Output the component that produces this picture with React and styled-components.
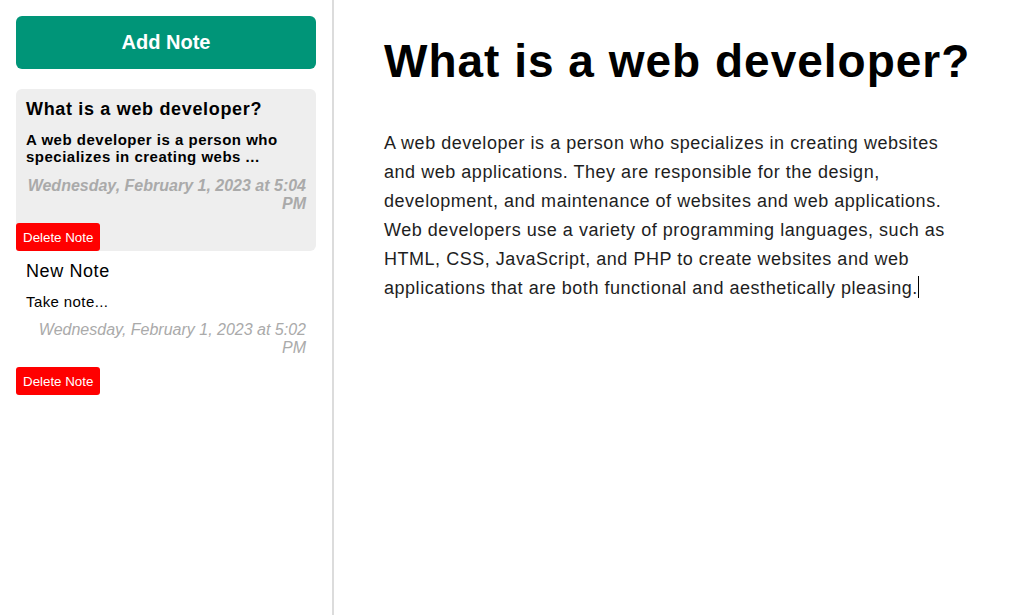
import React from "react";
import styled, { createGlobalStyle } from "styled-components";

const GlobalStyle = createGlobalStyle`
  html, body { margin: 0; padding: 0; background: #fff; }
  body { font-family: "Liberation Sans", Arial, sans-serif; }
  * { box-sizing: border-box; }
`;

const Layout = styled.div`
  display: flex;
  width: 1019px;
  height: 615px;
  overflow: hidden;
`;

const Sidebar = styled.aside`
  width: 334px;
  flex-shrink: 0;
  border-right: 2px solid #dcdcdc;
  padding: 16px;
  display: flex;
  flex-direction: column;
`;

const AddButton = styled.button`
  height: 53px;
  width: 100%;
  border: none;
  border-radius: 6px;
  background: #009578;
  color: #fff;
  font-family: "Liberation Sans", Arial, sans-serif;
  font-weight: bold;
  font-size: 20px;
  margin-bottom: 20px;
  cursor: pointer;
`;

const NoteList = styled.div`
  display: flex;
  flex-direction: column;
`;

const NoteCard = styled.div`
  border-radius: 6px;
  background: ${(p) => (p.$active ? "#eeeeee" : "transparent")};
  padding-top: 10px;
  display: flex;
  flex-direction: column;
`;

const NoteTitle = styled.div`
  font-size: 18px;
  font-weight: ${(p) => (p.$active ? "bold" : "normal")};
  letter-spacing: ${(p) => (p.$active ? "0.67px" : "0.6px")};
  color: #000;
  padding: 0 10px;
  margin-bottom: 11px;
`;

const NoteBody = styled.div`
  font-size: 15px;
  font-weight: ${(p) => (p.$active ? "bold" : "normal")};
  letter-spacing: ${(p) => (p.$active ? "0.5px" : "0.4px")};
  color: #000;
  padding: 0 10px;
  margin-bottom: ${(p) => (p.$active ? "12px" : "11px")};
`;

const NoteDate = styled.div`
  font-size: 16px;
  font-style: italic;
  font-weight: ${(p) => (p.$active ? "bold" : "normal")};
  color: #aaaaaa;
  text-align: right;
  padding: 0 10px;
  margin-bottom: 10px;
`;

const DeleteButton = styled.button`
  align-self: flex-start;
  height: 28px;
  padding: 0 7px;
  border: none;
  border-radius: 3px;
  background: #ff0000;
  color: #fff;
  font-family: "Liberation Sans", Arial, sans-serif;
  font-size: 13.33px;
  cursor: pointer;
`;

const Main = styled.main`
  flex: 1;
  padding: 34px 50px;
  display: flex;
  flex-direction: column;
`;

const Title = styled.div`
  font-size: 46px;
  font-weight: bold;
  letter-spacing: 1px;
  color: #000;
  white-space: nowrap;
  margin-bottom: 41px;
`;

const Body = styled.div`
  font-size: 18px;
  line-height: 29px;
  letter-spacing: 0.53px;
  color: #1e1e1e;
`;

const Caret = styled.span`
  display: inline-block;
  width: 1px;
  height: 22px;
  background: #000;
  vertical-align: -4px;
`;

const notes = [
  {
    title: "What is a web developer?",
    body: "A web developer is a person who specializes in creating webs ...",
    date: "Wednesday, February 1, 2023 at 5:04 PM",
    active: true,
  },
  {
    title: "New Note",
    body: "Take note...",
    date: "Wednesday, February 1, 2023 at 5:02 PM",
    active: false,
  },
];

export default function App() {
  return (
    <>
      <GlobalStyle />
      <Layout>
        <Sidebar>
          <AddButton>Add Note</AddButton>
          <NoteList>
            {notes.map((n, i) => (
              <NoteCard key={i} $active={n.active}>
                <NoteTitle $active={n.active}>{n.title}</NoteTitle>
                <NoteBody $active={n.active}>{n.body}</NoteBody>
                <NoteDate $active={n.active}>{n.date}</NoteDate>
                <DeleteButton>Delete Note</DeleteButton>
              </NoteCard>
            ))}
          </NoteList>
        </Sidebar>
        <Main>
          <Title>What is a web developer?</Title>
          <Body>
            A web developer is a person who specializes in creating websites
            and web applications. They are responsible for the design,
            development, and maintenance of websites and web applications. Web
            developers use a variety of programming languages, such as HTML,
            CSS, JavaScript, and PHP to create websites and web applications
            that are both functional and aesthetically pleasing.
            <Caret />
          </Body>
        </Main>
      </Layout>
    </>
  );
}
